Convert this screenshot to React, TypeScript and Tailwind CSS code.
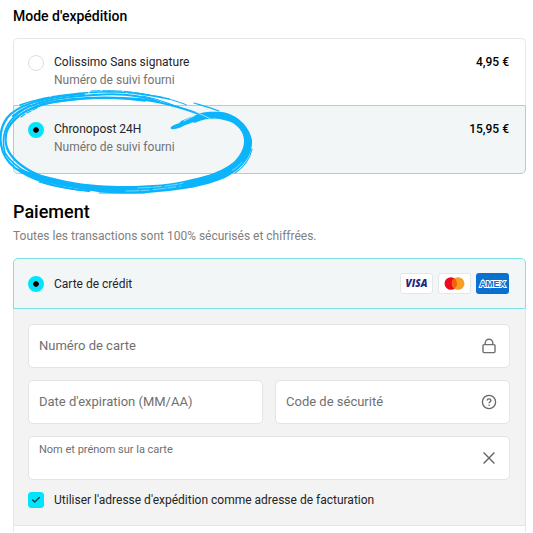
import { useState } from "react";
import type { ReactNode } from "react";
import { Check } from "lucide-react";

const radioClass =
  "size-4 shrink-0 appearance-none rounded-full border border-[#dedede] bg-white bg-clip-padding checked:border-[5px] checked:border-[#00e5fb] checked:bg-black";

const inputClass =
  "w-full min-w-0 bg-transparent text-[13px] text-[#333333] outline-none placeholder:text-[#707070] placeholder:opacity-100";

const fieldClass =
  "flex h-[44px] items-center gap-2 rounded-[5px] border border-[#e4e4e4] bg-white pl-2.5 pr-3";

const SHIPPING = [
  { id: "colissimo", name: "Colissimo Sans signature", price: "4,95 €" },
  { id: "chronopost", name: "Chronopost 24H", price: "15,95 €" },
];

const LockIcon = () => (
  <svg viewBox="0 0 16 16" className="size-4 shrink-0" fill="none" stroke="#707070" strokeWidth="1.4" aria-hidden="true">
    <rect x="2" y="6.6" width="12" height="8" rx="1" />
    <path d="M4.2 6.4V5a3.8 3.8 0 0 1 7.6 0v1.4" />
  </svg>
);

const HelpIcon = () => (
  <svg viewBox="0 0 16 16" className="size-4" fill="none" stroke="#666666" strokeWidth="1.3" aria-hidden="true">
    <circle cx="8" cy="8" r="6.6" />
    <path d="M6.2 6.5c0-2.2 3.7-2.2 3.7 0 0 1.3-1.8 1.2-1.8 2.7" strokeWidth="1.4" />
    <circle cx="8.1" cy="11.2" r="0.8" fill="#666666" stroke="none" />
  </svg>
);

const CloseIcon = () => (
  <svg viewBox="0 0 16 16" className="size-4" fill="none" stroke="#666666" strokeWidth="1.4" aria-hidden="true">
    <path d="M2.6 2.6l10.8 10.8M13.4 2.6L2.6 13.4" />
  </svg>
);

const CardBadge = ({ label, className, children }: { label: string; className: string; children: ReactNode }) => (
  <svg viewBox="0 0 33 21" role="img" aria-label={label} className={`h-[21px] w-[33px] rounded-[3px] ${className}`}>
    {children}
  </svg>
);

// Brush stroke drawn around the express delivery option
const BrushCircle = () => (
  <svg
    viewBox="0 88 256 108"
    className="pointer-events-none absolute -left-[13px] top-[50px] h-[108px] w-[256px]"
    fill="none"
    stroke="#0bb4fb"
    strokeLinecap="round"
    aria-hidden="true"
  >
    <path
      fill="#0bb4fb"
      stroke="none"
      d="M171 127C174 124 180 124 181 121C187 119 189 117 194 116C200 112 209 111 222 112C237 114 250 127 252 140C253 156 242 169 225 178C204 187 181 190 158 192C138 194 116 194 98 192L67 187C46 183 28 178 16 168C28 172 46 176 67 181C86 185 108 186 125 186C151 186 174 184 192 179C213 175 231 167 238 157C250 142 243 126 228 121C218 118 213 118 210 119C203 119 201 121 197 122C195 124 193 121 189 124C183 125 180 129 174 129C171 130 170 128 171 127Z"
    />
    <path
      d="M89 191C60 188 32 181 15 168C-2 155-3 132 7 118C20 101 57 96 84 94"
      strokeWidth="2.2"
    />
    <path
      d="M75 186C45 180 15 168 7 148C0 126 20 111 43 104C75 96 133 95 166 104C183 108 197 113 209 118"
      strokeWidth="2.2"
    />
    <path d="M62 184C35 179 15 169 5 153C0 134 7 120 23 110" strokeWidth="1.6" />
    <path d="M13 116C30 101 64 97 94 95C118 93 141 95 159 102" strokeWidth="2.2" />
    <path d="M23 113C35 106 47 103 64 101C92 97 123 98 145 101" strokeWidth="1.4" />
    <path d="M20 105C46 96 75 93 101 92C127 91 150 95 169 99" strokeWidth="1.6" strokeDasharray="21 1 9 2 4 1" />
    <path d="M91 91C115 90 132 91 154 96C168 98 176 101 187 105" strokeWidth="1" strokeDasharray="9 2 4 1 15 2" />
    <path d="M142 96C155 98 168 103 178 107M194 103C204 106 211 108 219 111" strokeWidth="1.2" />
    <path d="M21 117C27 112 32 111 38 107M12 123L19 116" strokeWidth="1.2" strokeDasharray="5 2" />
    <path d="M39 182C58 188 75 190 90 191M99 193L145 193M252 149C250 159 244 167 235 173" strokeWidth="1.2" />
    <path d="M126 191C145 191 162 189 181 186M138 188C159 187 171 186 183 183M242 162C239 166 236 168 231 171" stroke="#a6e4fc" strokeWidth="0.7" strokeDasharray="13 2 8 4" />
    <path d="M196 112L211 119M184 121L194 116" stroke="#e5f7fd" strokeWidth="0.7" />
  </svg>
);

const App = () => {
  const [shipping, setShipping] = useState("chronopost");
  const [holder, setHolder] = useState("");

  return (
    <main className="bg-white pl-[13px] pr-[7px] pt-[7px] font-[Roboto,sans-serif] text-[12px] leading-[18px] text-[#242424]">
      {/* Shipping */}
      <section>
        <h2 className="text-sm font-medium leading-[18px] text-black">Mode d'expédition</h2>
        <div className="relative mt-[13px]">
          <div>
            {SHIPPING.map((option) => (
              <label
                key={option.id}
                className="flex h-[67px] gap-2.5 border border-b-0 border-[#e8e8e8] pl-3.5 pr-4 pt-3.5 first:rounded-t-[5px] last:h-[69px] last:rounded-b-[5px] last:border-b has-checked:border-[#7de3e9] has-checked:bg-[#f2f6f7]"
              >
                <input
                  type="radio"
                  name="shipping"
                  checked={shipping === option.id}
                  onChange={() => setShipping(option.id)}
                  className={`mt-0.5 ${radioClass}`}
                />
                <span className="flex-1">
                  <span className="block">{option.name}</span>
                  <span className="block text-[#737373]">Numéro de suivi fourni</span>
                </span>
                <span className="font-medium text-black">{option.price}</span>
              </label>
            ))}
          </div>
          <BrushCircle />
        </div>
      </section>

      {/* Payment */}
      <section className="pt-[26px]">
        <h2 className="text-lg font-medium leading-6 text-black">Paiement</h2>
        <p className="mt-[3px] text-[#808080]">
          Toutes les transactions sont 100% sécurisés et chiffrées.
        </p>

        <div className="mt-[13px]">
          <div className="flex h-[51px] items-center justify-between rounded-t-[5px] border border-[#7de3e9] bg-[#f2f6f7] pl-3.5 pr-4">
            <label className="flex items-center gap-2.5">
              <input type="radio" name="payment" defaultChecked className={radioClass} />
              Carte de crédit
            </label>
            <div className="flex gap-[5px]">
              <CardBadge label="Visa" className="border border-[#e4e7e8] bg-white">
                <text x="16.5" y="14.5" textAnchor="middle" fontFamily="Open Sans, sans-serif" fontSize="11" fontWeight="800" fontStyle="italic" fill="#24297b">VISA</text>
              </CardBadge>
              <CardBadge label="Mastercard" className="border border-[#e4e7e8] bg-white">
                <circle cx="12.5" cy="10.5" r="7" fill="#eb0a20" />
                <circle cx="20.5" cy="10.5" r="7" fill="#f89e20" />
                <path d="M16.5 4.8a7 7 0 0 1 0 11.4a7 7 0 0 1 0-11.4" fill="#f36014" />
              </CardBadge>
              <CardBadge label="American Express" className="bg-[#0870ce]">
                <text x="16.5" y="14" textAnchor="middle" fontFamily="Liberation Sans, sans-serif" fontSize="9" fontWeight="700" fill="#0870ce" stroke="#ffffff" strokeWidth="1.8" paintOrder="stroke">AMEX</text>
              </CardBadge>
            </div>
          </div>

          <div className="border-x border-b border-[#e5e5e5] bg-[#f3f3f3] pb-4 pl-3.5 pr-[15px] pt-[15px]">
            <div className="grid grid-cols-2 gap-3">
              <label className={`col-span-2 ${fieldClass}`}>
                <input aria-label="Numéro de carte" placeholder="Numéro de carte" inputMode="numeric" className={inputClass} />
                <LockIcon />
              </label>
              <label className={fieldClass}>
                <input aria-label="Date d'expiration" placeholder="Date d'expiration (MM/AA)" className={inputClass} />
              </label>
              <div className={fieldClass}>
                <input aria-label="Code de sécurité" placeholder="Code de sécurité" className={inputClass} />
                <button type="button" aria-label="Aide">
                  <HelpIcon />
                </button>
              </div>
              <div className={`col-span-2 ${fieldClass}`}>
                <div className="flex-1">
                  <label htmlFor="holder" className="block text-[11px] leading-4 text-[#707070]">
                    Nom et prénom sur la carte
                  </label>
                  <input
                    id="holder"
                    value={holder}
                    onChange={(e) => setHolder(e.target.value)}
                    className={`block h-4 ${inputClass}`}
                  />
                </div>
                <button type="button" aria-label="Effacer" onClick={() => setHolder("")}>
                  <CloseIcon />
                </button>
              </div>
            </div>

            <label className="mt-[11px] flex items-center gap-2.5">
              <span className="relative size-4">
                <input type="checkbox" defaultChecked className="peer block size-4 appearance-none rounded-[3px] border border-[#dedede] bg-white checked:border-[#00e5fb] checked:bg-[#00e5fb]" />
                <Check className="pointer-events-none absolute inset-0 m-auto hidden size-2.5 text-[#123b40] peer-checked:block" strokeWidth={3.5} />
              </span>
              Utiliser l'adresse d'expédition comme adresse de facturation
            </label>
          </div>
          <div className="h-1.5 border-x border-[#e8e8e8]"></div>
        </div>
      </section>
    </main>
  );
};

export default App;
